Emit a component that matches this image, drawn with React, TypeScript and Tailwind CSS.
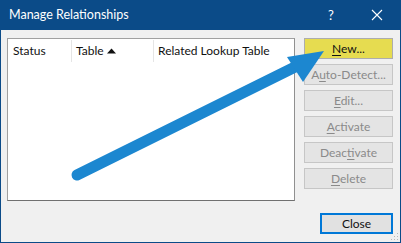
const SideButton = ({ label, mnemonic, yellow }: { label: string, mnemonic: number, yellow?: boolean }) => {
  const before = label.slice(0, mnemonic);
  const key = label.slice(mnemonic, mnemonic + 1);
  const after = label.slice(mnemonic + 1);
  return (
    <div
      className={
        yellow
          ? "h-[21px] w-[89px] flex items-center justify-center border border-[#adadad] bg-[#e6dc50] text-[#111]"
          : "h-[21px] w-[89px] flex items-center justify-center border border-[#c6c6c6] bg-[#e4e4e4] text-[#8a8a8a]"
      }
    >
      <span>{before}<span className="underline underline-offset-2">{key}</span>{after}</span>
    </div>
  );
};

const App = () => {
  return (
    <div
      className="relative w-[401px] h-[243px] bg-[#f0f0f0] border-x border-b border-[#0b4b88] overflow-hidden text-[12px] leading-none"
      style={{ fontFamily: 'Lato, "Noto Sans", sans-serif' }}
    >
      {/* Title bar */}
      <div className="h-[30px] bg-[#0b4b88] flex items-center text-white">
        <span className="pl-[8px] text-[12.5px]">Manage Relationships</span>
        <div className="ml-auto flex items-center">
          <span className="w-[46px] text-center text-[13px]">?</span>
          <svg width="46" height="30" viewBox="0 0 46 30">
            <path d="M18 10 L28 20 M28 10 L18 20" stroke="white" strokeWidth="1.1" />
          </svg>
        </div>
      </div>

      {/* Body */}
      <div className="flex pt-[8px] pl-[6px]">
        {/* List */}
        <div className="w-[288px] h-[163px] bg-white border border-[#a0a0a0] border-b-[#707070] border-r-[#909090]">
          <div className="flex h-[22px] mt-[1px] items-center text-[#111]">
            <div className="w-[64px] pl-[5px] h-full flex items-center border-r border-[#e5e5e5]">Status</div>
            <div className="w-[82px] pl-[4px] h-full flex items-center gap-[3px] border-r border-[#e5e5e5]">
              Table
              <svg width="9" height="6" viewBox="0 0 9 6"><path d="M0 5.5 L4.5 0.5 L9 5.5 Z" fill="#111" /></svg>
            </div>
            <div className="pl-[4px]">Related Lookup Table</div>
          </div>
        </div>

        {/* Buttons */}
        <div className="ml-[9px] flex flex-col gap-[5px]">
          <SideButton label="New..." mnemonic={0} yellow />
          <SideButton label="Auto-Detect..." mnemonic={1} />
          <SideButton label="Edit..." mnemonic={0} />
          <SideButton label="Activate" mnemonic={0} />
          <SideButton label="Deactivate" mnemonic={4} />
          <SideButton label="Delete" mnemonic={0} />
        </div>
      </div>

      {/* Close */}
      <div className="flex justify-end pr-[7px] pt-[12px]">
        <div className="w-[73px] h-[21px] flex items-center justify-center border-2 border-[#0078d7] bg-[#e1e1e1] text-[#111]">
          Close
        </div>
      </div>

      {/* Resize grip */}
      <svg className="absolute right-[1px] bottom-[1px]" width="8" height="8" viewBox="0 0 8 8">
        <g fill="#b8b8b8">
          <rect x="6" y="0" width="1" height="1" />
          <rect x="3" y="3" width="1" height="1" />
          <rect x="6" y="3" width="1" height="1" />
          <rect x="0" y="6" width="1" height="1" />
          <rect x="3" y="6" width="1" height="1" />
          <rect x="6" y="6" width="1" height="1" />
        </g>
      </svg>

      {/* Annotation arrow */}
      <svg className="absolute left-0 top-0 pointer-events-none" width="401" height="243" viewBox="0 0 401 243">
        <line x1="76" y1="175" x2="296" y2="66" stroke="#1c87d0" strokeWidth="11" strokeLinecap="round" />
        <path d="M286 57 L323 51 L302 82 Z" fill="#1c87d0" />
      </svg>
    </div>
  );
};

export default App;
